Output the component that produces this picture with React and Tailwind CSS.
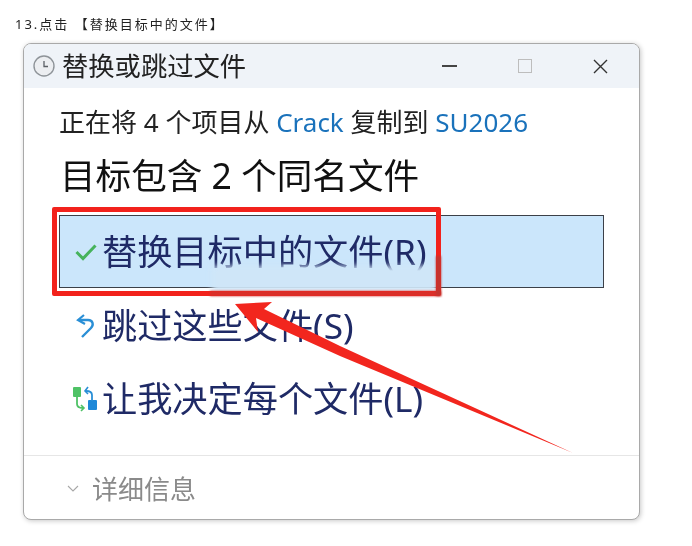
const font = { fontFamily: '"Noto Sans", "Noto Sans CJK SC", sans-serif' };

function ClockIcon() {
  return (
    <svg width="22" height="22" viewBox="0 0 22 22" className="shrink-0">
      <circle cx="11" cy="11" r="10" fill="#eceef1" stroke="#8f9499" strokeWidth="1.4" />
      <path d="M11 6v5.5h4" fill="none" stroke="#5c6066" strokeWidth="1.3" />
    </svg>
  );
}

function CheckIcon() {
  return (
    <svg width="22" height="18" viewBox="0 0 22 18">
      <path d="M1.5 9 8 15.5 20.5 2.5" fill="none" stroke="#46b35c" strokeWidth="3" />
    </svg>
  );
}

function SkipIcon() {
  return (
    <svg width="22" height="26" viewBox="0 0 22 26">
      <path d="M9 2 3 7l7 4" fill="none" stroke="#2a8fd6" strokeWidth="2.2" />
      <path d="M4 7h9c5 0 6 5 3 8l-9 9" fill="none" stroke="#2a8fd6" strokeWidth="2.4" />
    </svg>
  );
}

function DecideIcon() {
  return (
    <svg width="24" height="26" viewBox="0 0 24 26">
      <rect x="0" y="1" width="8" height="10" rx="1" fill="#4fc266" />
      <rect x="15" y="14" width="9" height="10" rx="1" fill="#1e88d8" />
      <path d="M4 10v8c0 3 2 4 6 4" fill="none" stroke="#4fc266" strokeWidth="1.8" />
      <path d="m8 19 3 3-3 3" fill="none" stroke="#4fc266" strokeWidth="1.6" />
      <path d="M19 15V9c0-3-2-4-6-4" fill="none" stroke="#2a8fd6" strokeWidth="1.8" />
      <path d="m15 1-3 4 3 3" fill="none" stroke="#2a8fd6" strokeWidth="1.6" />
    </svg>
  );
}

function ActionRow({ icon, label, className = '' }) {
  return (
    <div className={`flex items-center ${className}`}>
      <span className="flex w-[43px] shrink-0 justify-end pr-[5px]">{icon}</span>
      <span className="text-[35.2px] leading-none text-[#1f2a66]">{label}</span>
    </div>
  );
}

export default function App() {
  return (
    <div className="relative h-[546px] w-[692px] overflow-hidden bg-white blur-[0.4px]" style={font}>
      <p className="pl-[15px] pt-[16px] text-[13px] leading-[16px] tracking-[2px] text-[#222]">
        13.点击 【替换目标中的文件】
      </p>

      <div className="ml-[23px] mt-[11px] flex h-[477px] w-[617px] flex-col overflow-hidden rounded-lg border border-[#a9a9a9] bg-white shadow-[1px_1px_5px_rgba(0,0,0,0.22)]">
        <div className="flex h-[44px] shrink-0 items-center bg-[#eff3f8] pl-[9px]">
          <ClockIcon />
          <span className="ml-[7px] text-[26.3px] leading-none text-[#222]">替换或跳过文件</span>
          <div className="ml-auto flex items-center pr-[31px]">
            <span className="h-[2px] w-[15px] bg-[#444]" />
            <span className="ml-[61px] h-[14px] w-[14px] border border-[#bdbdbd]" />
            <svg width="15" height="15" viewBox="0 0 15 15" className="ml-[61px]">
              <path d="m1 1 13 13M14 1 1 14" stroke="#333" strokeWidth="1.4" />
            </svg>
          </div>
        </div>

        <p className="ml-[35px] mt-[16px] text-[26px] leading-[36px] text-[#222]">
          正在将 4 个项目从 <span className="text-[#1a72bb]">Crack</span> 复制到{' '}
          <span className="text-[#1a72bb]">SU2026</span>
        </p>
        <p className="ml-[36px] mt-[12px] text-[35.6px] leading-[46px] text-[#111]">目标包含 2 个同名文件</p>

        <div className="relative ml-[35px] mt-[17px] h-[73px] w-[545px] border border-[#3c4048] bg-[#cbe6fb]">
          <ActionRow icon={<CheckIcon />} label="替换目标中的文件(R)" className="h-full -translate-x-px" />
          <div className="absolute left-[152px] top-[50px] h-[26px] w-[225px] bg-[#cfe6f8] blur-[3px]" />
          <div className="absolute left-[-8px] top-[-9px] h-[89px] w-[389px] rounded-[2px] border-[5px] border-[#f2221c]" />
          <div className="absolute left-[150px] top-[75px] h-[5px] w-[231px] bg-[#d8302a] blur-[1px]" />
          <div className="absolute left-[376px] top-[40px] h-[40px] w-[5px] bg-[#c2342f] blur-[1px]" />
        </div>

        <ActionRow icon={<SkipIcon />} label="跳过这些文件(S)" className="ml-[35px] mt-[18px] h-[40px]" />
        <ActionRow icon={<DecideIcon />} label="让我决定每个文件(L)" className="ml-[35px] mt-[33px] h-[40px]" />

        <div className="mt-[36px] border-t border-[#e6e6e6]" />
        <div className="ml-[43px] mt-[17px] flex items-center">
          <svg width="12" height="8" viewBox="0 0 12 8">
            <path d="m1 1 5 5 5-5" fill="none" stroke="#a8a8a8" strokeWidth="1.1" />
          </svg>
          <span className="ml-[13px] text-[26px] leading-[32px] text-[#8a8a8a]">详细信息</span>
        </div>
      </div>

      <svg width="692" height="546" viewBox="0 0 692 546" className="pointer-events-none absolute left-0 top-0">
        <polygon points="235,304 272,302 264,309 340,346 573,453 340,356 256,318 258,332" fill="#f2261e" />
      </svg>
    </div>
  );
}
